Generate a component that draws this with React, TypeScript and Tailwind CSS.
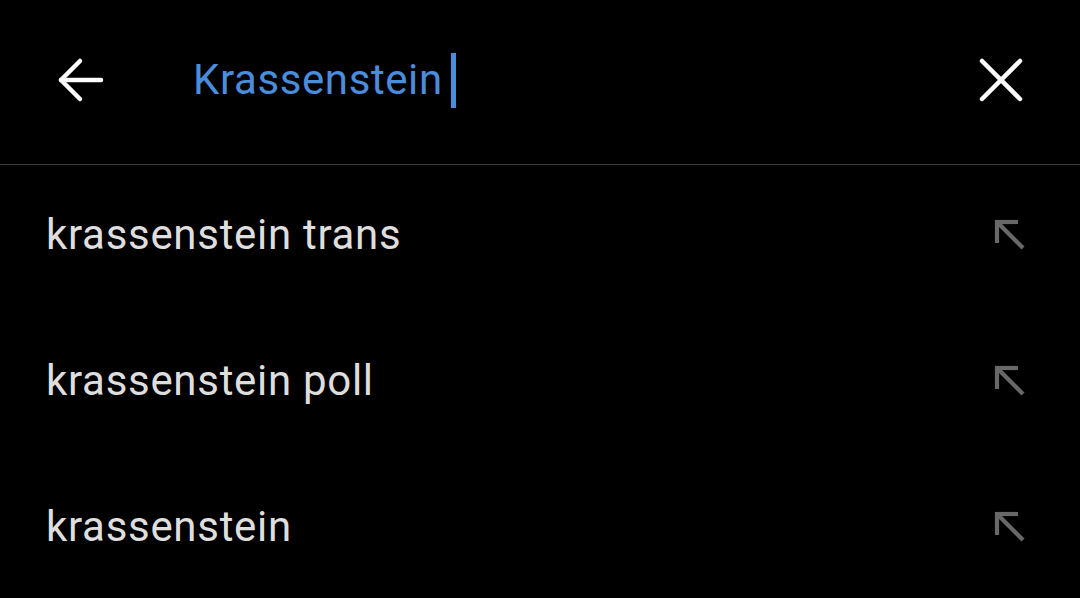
import React from "react";

const rows = ["krassenstein trans", "krassenstein poll", "krassenstein"];

function UpLeft() {
  return (
    <svg width="34" height="34" viewBox="0 0 34 34" fill="none" stroke="#686868" strokeWidth="4.2" strokeLinecap="butt">
      <path d="M4 4 L30 30" />
      <path d="M2 4 H25" />
      <path d="M4 2 V25" />
    </svg>
  );
}

export default function App() {
  return (
    <div className="w-[1080px] h-[598px] bg-black overflow-hidden" style={{ fontFamily: "Roboto, 'Noto Sans', sans-serif" }}>
      <div className="h-[165px] border-b border-[#3a3a3a] flex items-center pb-[4px]">
        <div className="w-[160px] flex justify-center pl-[1px]">
          <svg width="48" height="46" viewBox="0 0 48 46" fill="none" stroke="white" strokeWidth="4.5" strokeLinecap="round" strokeLinejoin="round">
            <path d="M4 23 H44" />
            <path d="M23 4 L4 23 L23 42" />
          </svg>
        </div>
        <div className="flex items-center ml-[33px]">
          <span className="text-[42px] leading-none text-[#4a8ddc] tracking-[0.6px]">Krassenstein</span>
          <span className="ml-[8px] w-[5px] h-[55px] bg-[#4a8ddc]" />
        </div>
        <div className="ml-auto mr-[57px]">
          <svg width="44" height="44" viewBox="0 0 44 44" fill="none" stroke="white" strokeWidth="4.5" strokeLinecap="round">
            <path d="M3 3 L41 41" />
            <path d="M41 3 L3 41" />
          </svg>
        </div>
      </div>
      <div>
        {rows.map((r) => (
          <div key={r} className="h-[146px] flex items-center pb-[6px] pl-[46px] pr-[53px]">
            <span className="text-[42px] leading-none text-[#dedede] tracking-[0.7px]">{r}</span>
            <div className="ml-auto">
              <UpLeft />
            </div>
          </div>
        ))}
      </div>
    </div>
  );
}
